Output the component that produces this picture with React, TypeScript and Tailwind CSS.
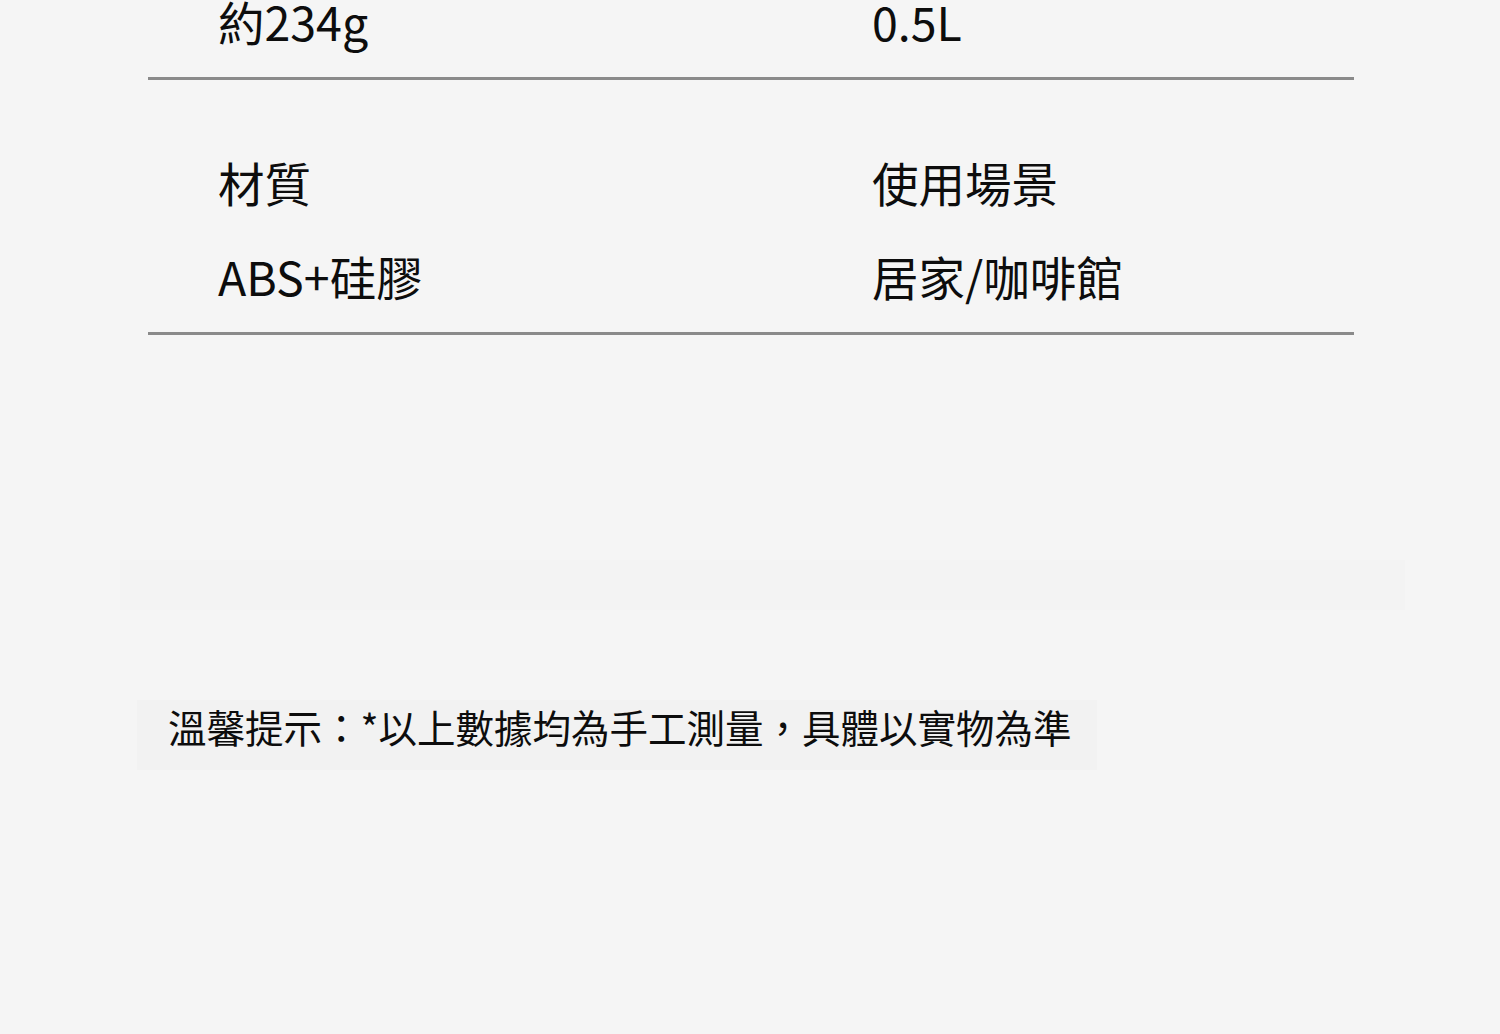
import React from "react";

const font = { fontFamily: '"Noto Sans CJK TC", "Noto Sans", sans-serif' };

function Row({ left, right }: { left: string; right: string }) {
  return (
    <div className="grid grid-cols-[654px_1fr] pl-[70px] h-[94px] items-center text-[46.5px] leading-[94px] text-[#0d0d0d]">
      <div>{left}</div>
      <div>{right}</div>
    </div>
  );
}

export default function App() {
  return (
    <div
      className="w-[1500px] h-[1034px] overflow-hidden bg-[#f5f5f5]"
      style={font}
    >
      <div className="ml-[148px] w-[1206px] mt-[-26px]">
        <Row left="約234g" right="0.5L" />
        <div className="h-[9px]" />
        <div className="h-[3px] bg-[#8a8a8a]" />
        <div className="h-[55px]" />
        <Row left="材質" right="使用場景" />
        <Row left="ABS+硅膠" right="居家/咖啡館" />
        <div className="h-[9px]" />
        <div className="h-[3px] bg-[#8a8a8a]" />
      </div>
      <div className="mt-[225px] ml-[120px] w-[1285px] h-[50px] bg-[#f3f3f3]" />
      <div className="mt-[90px] ml-[137px] w-[960px] h-[70px] flex items-center pl-[31px] pb-[16px] bg-[#f2f2f2] text-[38.5px] text-[#0d0d0d] whitespace-nowrap">
        溫馨提示：*以上數據均為手工測量，具體以實物為準
      </div>
    </div>
  );
}
